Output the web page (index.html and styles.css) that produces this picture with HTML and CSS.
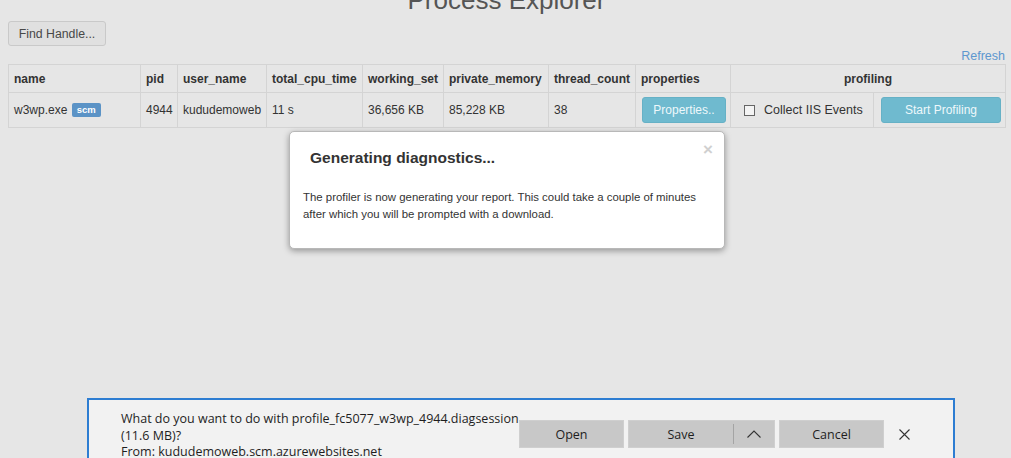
FILE: index.html
```html
<!DOCTYPE html>
<html>
<head>
<meta charset="utf-8">
<title>Process Explorer</title>
<link rel="stylesheet" href="styles.css">
</head>
<body>
<div class="page">
  <h2 class="title">Process Explorer</h2>
  <div class="toolbar"><button class="btn btn-default">Find Handle...</button></div>
  <div class="refresh-row"><a class="refresh">Refresh</a></div>
  <table class="procs">
    <colgroup>
      <col class="c-name"><col class="c-pid"><col class="c-user"><col class="c-cpu"><col class="c-ws"><col class="c-pm"><col class="c-tc"><col class="c-props"><col class="c-prof-a"><col class="c-prof-b">
    </colgroup>
    <thead>
      <tr>
        <th>name</th><th>pid</th><th>user_name</th><th>total_cpu_time</th><th>working_set</th><th>private_memory</th><th>thread_count</th><th>properties</th><th colspan="2" class="center">profiling</th>
      </tr>
    </thead>
    <tbody>
      <tr>
        <td>w3wp.exe <span class="badge">scm</span></td>
        <td>4944</td>
        <td>kududemoweb</td>
        <td>11 s</td>
        <td>36,656 KB</td>
        <td>85,228 KB</td>
        <td>38</td>
        <td class="btn-cell"><button class="btn btn-info btn-props">Properties..</button></td>
        <td class="chk-cell"><label class="chk"><span class="box"></span>Collect IIS Events</label></td>
        <td class="btn-cell"><button class="btn btn-info btn-start">Start Profiling</button></td>
      </tr>
    </tbody>
  </table>
</div>

<div class="modal">
  <div class="modal-header">
    <span class="close">&times;</span>
    <h4 class="modal-title">Generating diagnostics...</h4>
  </div>
  <div class="modal-body">
    The profiler is now generating your report. This could take a couple of minutes after which you will be prompted with a download.
  </div>
</div>

<div class="download">
  <div class="dl-text">
    <div>What do you want to do with profile_fc5077_w3wp_4944.diagsession</div>
    <div>(11.6 MB)?</div>
    <div>From: kududemoweb.scm.azurewebsites.net</div>
  </div>
  <div class="dl-actions">
    <button class="dl-btn dl-open">Open</button>
    <div class="dl-split">
      <button class="dl-btn dl-save">Save</button>
      <span class="dl-sep"></span>
      <button class="dl-btn dl-caret"><svg width="14" height="8" viewBox="0 0 14 8"><path d="M0.5 7.5 L7 1 L13.5 7.5" fill="none" stroke="#333" stroke-width="1.1"/></svg></button>
    </div>
    <button class="dl-btn dl-cancel">Cancel</button>
    <button class="dl-close"><svg width="11" height="11" viewBox="0 0 11 11"><path d="M0.5 0.5 L10.5 10.5 M10.5 0.5 L0.5 10.5" stroke="#333" stroke-width="1.1"/></svg></button>
  </div>
</div>
</body>
</html>
```
FILE: styles.css
```css
html, body {
  margin: 0;
  padding: 0;
  background: #e6e6e6;
  height: 100%;
  overflow: hidden;
}
body {
  font-family: "Liberation Sans", Arial, sans-serif;
  font-size: 12px;
  color: #333;
}
.page {
  padding: 0 6px 0 8px;
}
.title {
  margin: -15px 0 0;
  height: 30px;
  line-height: 30px;
  font-size: 26px;
  font-weight: normal;
  text-align: center;
  color: #555;
}
.toolbar {
  margin-top: 6px;
  height: 25px;
}
.btn {
  font-family: "Liberation Sans", Arial, sans-serif;
  font-size: 12px;
  border-radius: 3px;
  border: 1px solid transparent;
  cursor: pointer;
  padding: 0;
}
.btn-default {
  height: 25px;
  width: 98px;
  background: #e0e0e0;
  border-color: #c9c9c9;
  color: #484848;
  font-size: 12.3px;
}
.refresh-row {
  margin-top: 2px;
  height: 16px;
  line-height: 16px;
  text-align: right;
}
.refresh {
  color: #5d97cf;
  font-size: 12.5px;
}
.procs {
  width: 997px;
  table-layout: fixed;
  border-collapse: collapse;
}
.c-name { width: 132px; }
.c-pid { width: 37px; }
.c-user { width: 89px; }
.c-cpu { width: 96px; }
.c-ws { width: 81px; }
.c-pm { width: 105px; }
.c-tc { width: 87px; }
.c-props { width: 95px; }
.c-prof-a { width: 143px; }
.c-prof-b { width: 132px; }
.procs th, .procs td {
  border: 1px solid #d4d4d4;
  padding: 0 5px;
  text-align: left;
  white-space: nowrap;
  overflow: hidden;
}
.procs th {
  height: 27px;
  font-weight: bold;
  color: #333;
}
.procs th.center {
  text-align: center;
}
.procs td {
  height: 34px;
  color: #333;
}
.badge {
  display: inline-block;
  background: #5b93c6;
  color: #fff;
  font-size: 9.5px;
  font-weight: bold;
  line-height: 14px;
  padding: 0 5px;
  border-radius: 2px;
  vertical-align: 1px;
  margin-left: 1px;
}
.procs td.btn-cell {
  padding: 0 5px 0 6px;
}
.btn-info {
  height: 26px;
  background: #6fbacf;
  border-color: #66b1c6;
  color: #eef8fb;
  display: block;
}
.btn-props { width: 84px; }
.btn-start { width: 120px; margin-left: 1px; }
.procs td.chk-cell {
  padding-left: 13px;
}
.chk {
  display: flex;
  align-items: center;
  gap: 9px;
  font-size: 12.5px;
}
.box {
  width: 9px;
  height: 9px;
  border: 1px solid #666;
  background: #f4f4f4;
}

/* modal */
.modal {
  position: absolute;
  left: 289px;
  top: 131px;
  width: 434px;
  height: 116px;
  background: #fff;
  border: 1px solid #b8b8b8;
  border-radius: 5px;
  box-shadow: 0 2px 6px rgba(0, 0, 0, 0.35);
}
.modal-header {
  padding: 15px 14px 13px 20px;
  position: relative;
}
.modal-title {
  margin: 0;
  font-size: 15.5px;
  line-height: 22px;
  font-weight: bold;
  color: #333;
}
.close {
  position: absolute;
  right: 11px;
  top: 8px;
  font-size: 17px;
  font-weight: bold;
  color: #d0d0d0;
  line-height: 20px;
}
.modal-body {
  padding: 7px 8px 0 13px;
  line-height: 17px;
  font-size: 11.4px;
  color: #333;
}

/* download bar */
.download {
  position: absolute;
  left: 87px;
  top: 398px;
  width: 864px;
  height: 80px;
  background: #f2f2f2;
  border: 2px solid #2d7dd2;
  display: flex;
  align-items: flex-start;
  font-family: "Open Sans", "Noto Sans", sans-serif;
  font-size: 12.5px;
  color: #1e1e1e;
}
.dl-text {
  width: 398px;
  padding-left: 32px;
  margin-top: 11px;
  line-height: 16.5px;
}
.dl-actions {
  margin-top: 20px;
  display: flex;
  align-items: center;
  gap: 4px;
}
.dl-btn {
  font-family: "Open Sans", "Noto Sans", sans-serif;
  font-size: 12.5px;
  color: #1e1e1e;
  background: #c8c8c8;
  border: 1px solid #cfcfcf;
  height: 28px;
  padding: 0;
}
.dl-open, .dl-cancel {
  width: 105px;
}
.dl-split {
  display: flex;
  align-items: center;
  background: #c8c8c8;
  border: 1px solid #cfcfcf;
  height: 26px;
}
.dl-split .dl-btn {
  border: none;
  height: 26px;
}
.dl-save {
  width: 104px;
}
.dl-sep {
  width: 1px;
  height: 20px;
  background: #a4a4a4;
}
.dl-caret {
  width: 40px;
  display: flex;
  align-items: center;
  justify-content: center;
}
.dl-close {
  margin-left: 6px;
  width: 20px;
  height: 20px;
  border: none;
  background: transparent;
  padding: 0;
  display: flex;
  align-items: center;
  justify-content: center;
}
```
